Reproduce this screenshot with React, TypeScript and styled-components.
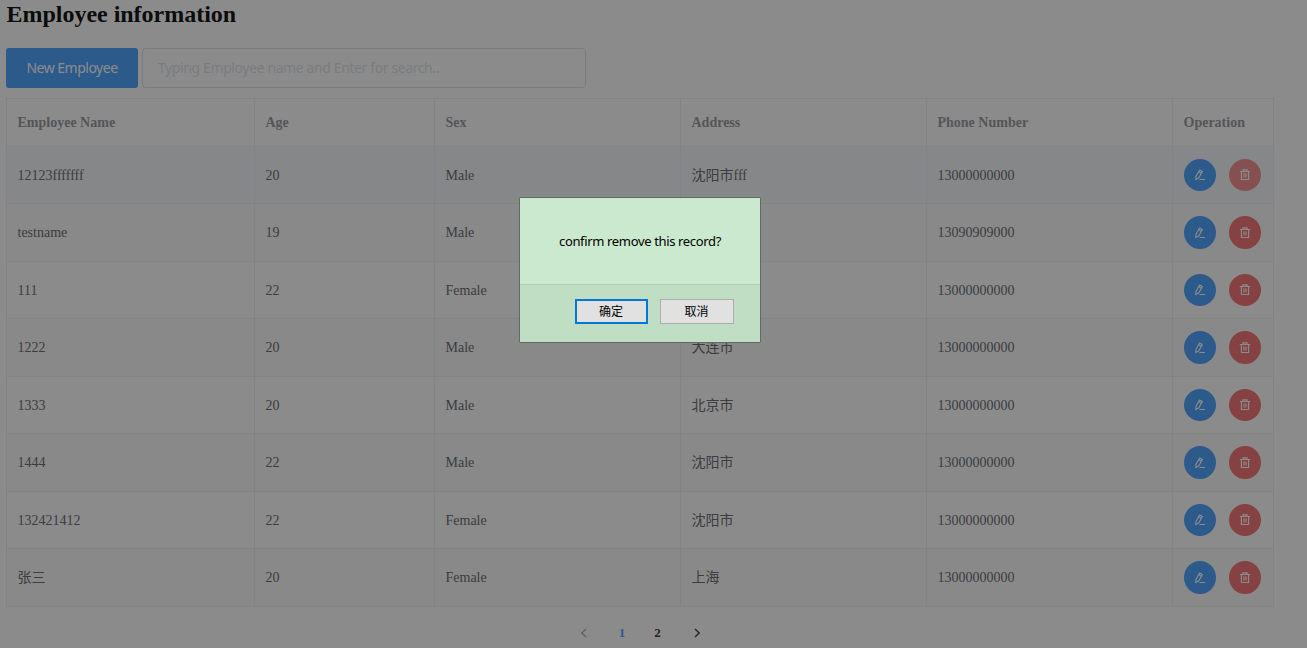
import React from "react";
import styled, { createGlobalStyle } from "styled-components";

const GlobalStyle = createGlobalStyle`
  * { box-sizing: border-box; }
  body {
    margin: 0;
    background: #fff;
    font-family: "Liberation Serif", "Noto Sans CJK SC", serif;
    overflow: hidden;
  }
`;

const Page = styled.main`
  height: 648px;
  padding: 0 33px 0 6px;
  overflow: hidden;
`;

const Title = styled.h2`
  margin: 0;
  height: 48px;
  padding-left: 0.5px;
  font-size: 24px;
  line-height: 28px;
  letter-spacing: -0.02px;
  color: #000;
`;

const Toolbar = styled.div`
  display: flex;
  gap: 4px;
  height: 40px;
  margin-bottom: 10px;
`;

const NewButton = styled.button`
  width: 132px;
  height: 40px;
  padding: 0 0 2px;
  border: 0;
  border-radius: 3px;
  background: #409eff;
  color: #fff;
  font: 14px "Noto Sans", sans-serif;
  letter-spacing: -0.5px;
`;

const SearchInput = styled.input`
  width: 444px;
  height: 40px;
  padding: 0 15px 2px;
  border: 1px solid #dcdfe6;
  border-radius: 4px;
  background: #fff;
  font: 14px "Noto Sans", sans-serif;
  letter-spacing: -0.39px;
  &::placeholder {
    color: #dcdfe6;
    opacity: 1;
  }
`;

const Table = styled.div`
  width: 1268px;
  border: 1px solid #ebeef5;
  border-right: 0;
  border-bottom: 0;
`;

const Row = styled.div<{ $height: number; $tone?: string }>`
  display: grid;
  grid-template-columns: 248px 180px 246px 246px 246px 101px;
  height: ${(p) => p.$height}px;
  background: ${(p) => p.$tone ?? "#fff"};
`;

const Cell = styled.div<{ $header?: boolean }>`
  display: flex;
  align-items: center;
  padding: ${(p) => (p.$header ? "0" : "1px")} 10.5px 0;
  border-right: 1px solid #ebeef5;
  border-bottom: 1px solid #ebeef5;
  font-size: 14px;
  line-height: 20px;
  font-weight: ${(p) => (p.$header ? 700 : 400)};
  color: ${(p) => (p.$header ? "#909399" : "#606266")};
`;

const Actions = styled(Cell)`
  gap: 13px;
  padding: 0 0 0 11px;
`;

const RoundButton = styled.button<{ $color: string; $height: number }>`
  display: flex;
  align-items: center;
  justify-content: center;
  flex: none;
  width: 32px;
  height: ${(p) => p.$height}px;
  padding: 0;
  border: 0;
  border-radius: 50%;
  background: ${(p) => p.$color};
  color: #fff;
`;

const Pagination = styled.nav`
  display: flex;
  align-items: center;
  height: 28px;
  margin: 12px 0 0 561px;
  font-size: 13px;
  font-weight: 700;
  color: #303133;
`;

const PageItem = styled.span<{ $width: number; $color?: string }>`
  display: flex;
  align-items: center;
  justify-content: center;
  width: ${(p) => p.$width}px;
  height: 28px;
  color: ${(p) => p.$color ?? "#303133"};
`;

const Overlay = styled.div`
  position: fixed;
  inset: 0;
  background: rgba(24, 24, 24, 0.5);
`;

const Dialog = styled.section`
  position: absolute;
  left: 519px;
  top: 197px;
  width: 242px;
  height: 146px;
  display: flex;
  flex-direction: column;
  border: 1px solid #626a63;
  border-radius: 1px;
  background: #cbe9ce;
  color: #000;
`;

const Message = styled.p`
  flex: 1;
  margin: 0;
  padding-bottom: 1px;
  display: flex;
  align-items: center;
  justify-content: center;
  font: 13px "Noto Sans", sans-serif;
  letter-spacing: -0.35px;
  white-space: nowrap;
`;

const Footer = styled.footer`
  display: flex;
  justify-content: flex-end;
  gap: 12px;
  height: 58px;
  padding: 14px 26px 0 0;
  border-top: 1px solid #b5d0b8;
  background: #c0dec4;
`;

const DialogButton = styled.button<{ $primary?: boolean }>`
  width: ${(p) => (p.$primary ? 73 : 74)}px;
  height: 25px;
  padding: 0 1px 1px 0;
  border: ${(p) => (p.$primary ? "2px solid #0078d7" : "1px solid #adadad")};
  background: #e1e1e1;
  color: #000;
  font: 12px "Noto Sans CJK SC", sans-serif;
  line-height: 20px;
`;

const EditIcon = () => (
  <svg width="12" height="12" viewBox="0 0 12 12" fill="none" stroke="currentColor" strokeWidth="1.15">
    <path d="M5.6 1 8.3 2.5 4.9 8.8 1.8 10.6 2 7.3Z" strokeLinejoin="round" />
    <path d="M4.8 2.7 7.4 4.2M5.4 10.5H11" />
  </svg>
);

const TrashIcon = () => (
  <svg width="12" height="12" viewBox="0 0 12 12" fill="none" stroke="currentColor" strokeWidth="1.15">
    <path d="M.8 2.5H11.2M4 2.5V.9H8V2.5M2.4 2.5V10.5H9.6V2.5M5 4.6V8.6M7 4.6V8.6" />
  </svg>
);

const Chevron = ({ next }: { next?: boolean }) => (
  <svg width="12" height="12" viewBox="0 0 12 12" fill="none" stroke="currentColor" strokeWidth="1.4">
    <path d={next ? "M4 2 8.2 6 4 10" : "M8 2 3.8 6 8 10"} />
  </svg>
);

const columns = ["Employee Name", "Age", "Sex", "Address", "Phone Number", "Operation"];

const employees = [
  ["12123fffffff", "20", "Male", "沈阳市fff", "13000000000"],
  ["testname", "19", "Male", "", "13090909000"],
  ["111", "22", "Female", "", "13000000000"],
  ["1222", "20", "Male", "大连市", "13000000000"],
  ["1333", "20", "Male", "北京市", "13000000000"],
  ["1444", "22", "Male", "沈阳市", "13000000000"],
  ["132421412", "22", "Female", "沈阳市", "13000000000"],
  ["张三", "20", "Female", "上海", "13000000000"],
];

export default function App() {
  return (
    <>
      <GlobalStyle />
      <Page>
        <Title>Employee information</Title>
        <Toolbar>
          <NewButton>New Employee</NewButton>
          <SearchInput placeholder="Typing Employee name and Enter for search.." />
        </Toolbar>
        <Table>
          <Row $height={48}>
            {columns.map((name) => (
              <Cell key={name} $header>{name}</Cell>
            ))}
          </Row>
          {employees.map((employee, i) => {
            const odd = i % 2 === 1;
            return (
              <Row key={i} $height={odd ? 58 : 57} $tone={i === 0 ? "#f5f7fa" : odd ? "#fafafa" : "#fff"}>
                {employee.map((value, j) => (
                  <Cell key={j}>{value}</Cell>
                ))}
                <Actions>
                  <RoundButton $color="#409eff" $height={odd ? 33 : 32} aria-label="Edit"><EditIcon /></RoundButton>
                  <RoundButton $color={i === 0 ? "#f78989" : "#f56c6c"} $height={odd ? 33 : 32} aria-label="Delete"><TrashIcon /></RoundButton>
                </Actions>
              </Row>
            );
          })}
        </Table>
        <Pagination>
          <PageItem $width={34} $color="#a8abb2"><Chevron /></PageItem>
          <PageItem $width={42} $color="#409eff">1</PageItem>
          <PageItem $width={29}>2</PageItem>
          <PageItem $width={50}><Chevron next /></PageItem>
        </Pagination>
      </Page>
      <Overlay>
        <Dialog role="dialog">
          <Message>confirm remove this record?</Message>
          <Footer>
            <DialogButton $primary>确定</DialogButton>
            <DialogButton>取消</DialogButton>
          </Footer>
        </Dialog>
      </Overlay>
    </>
  );
}
